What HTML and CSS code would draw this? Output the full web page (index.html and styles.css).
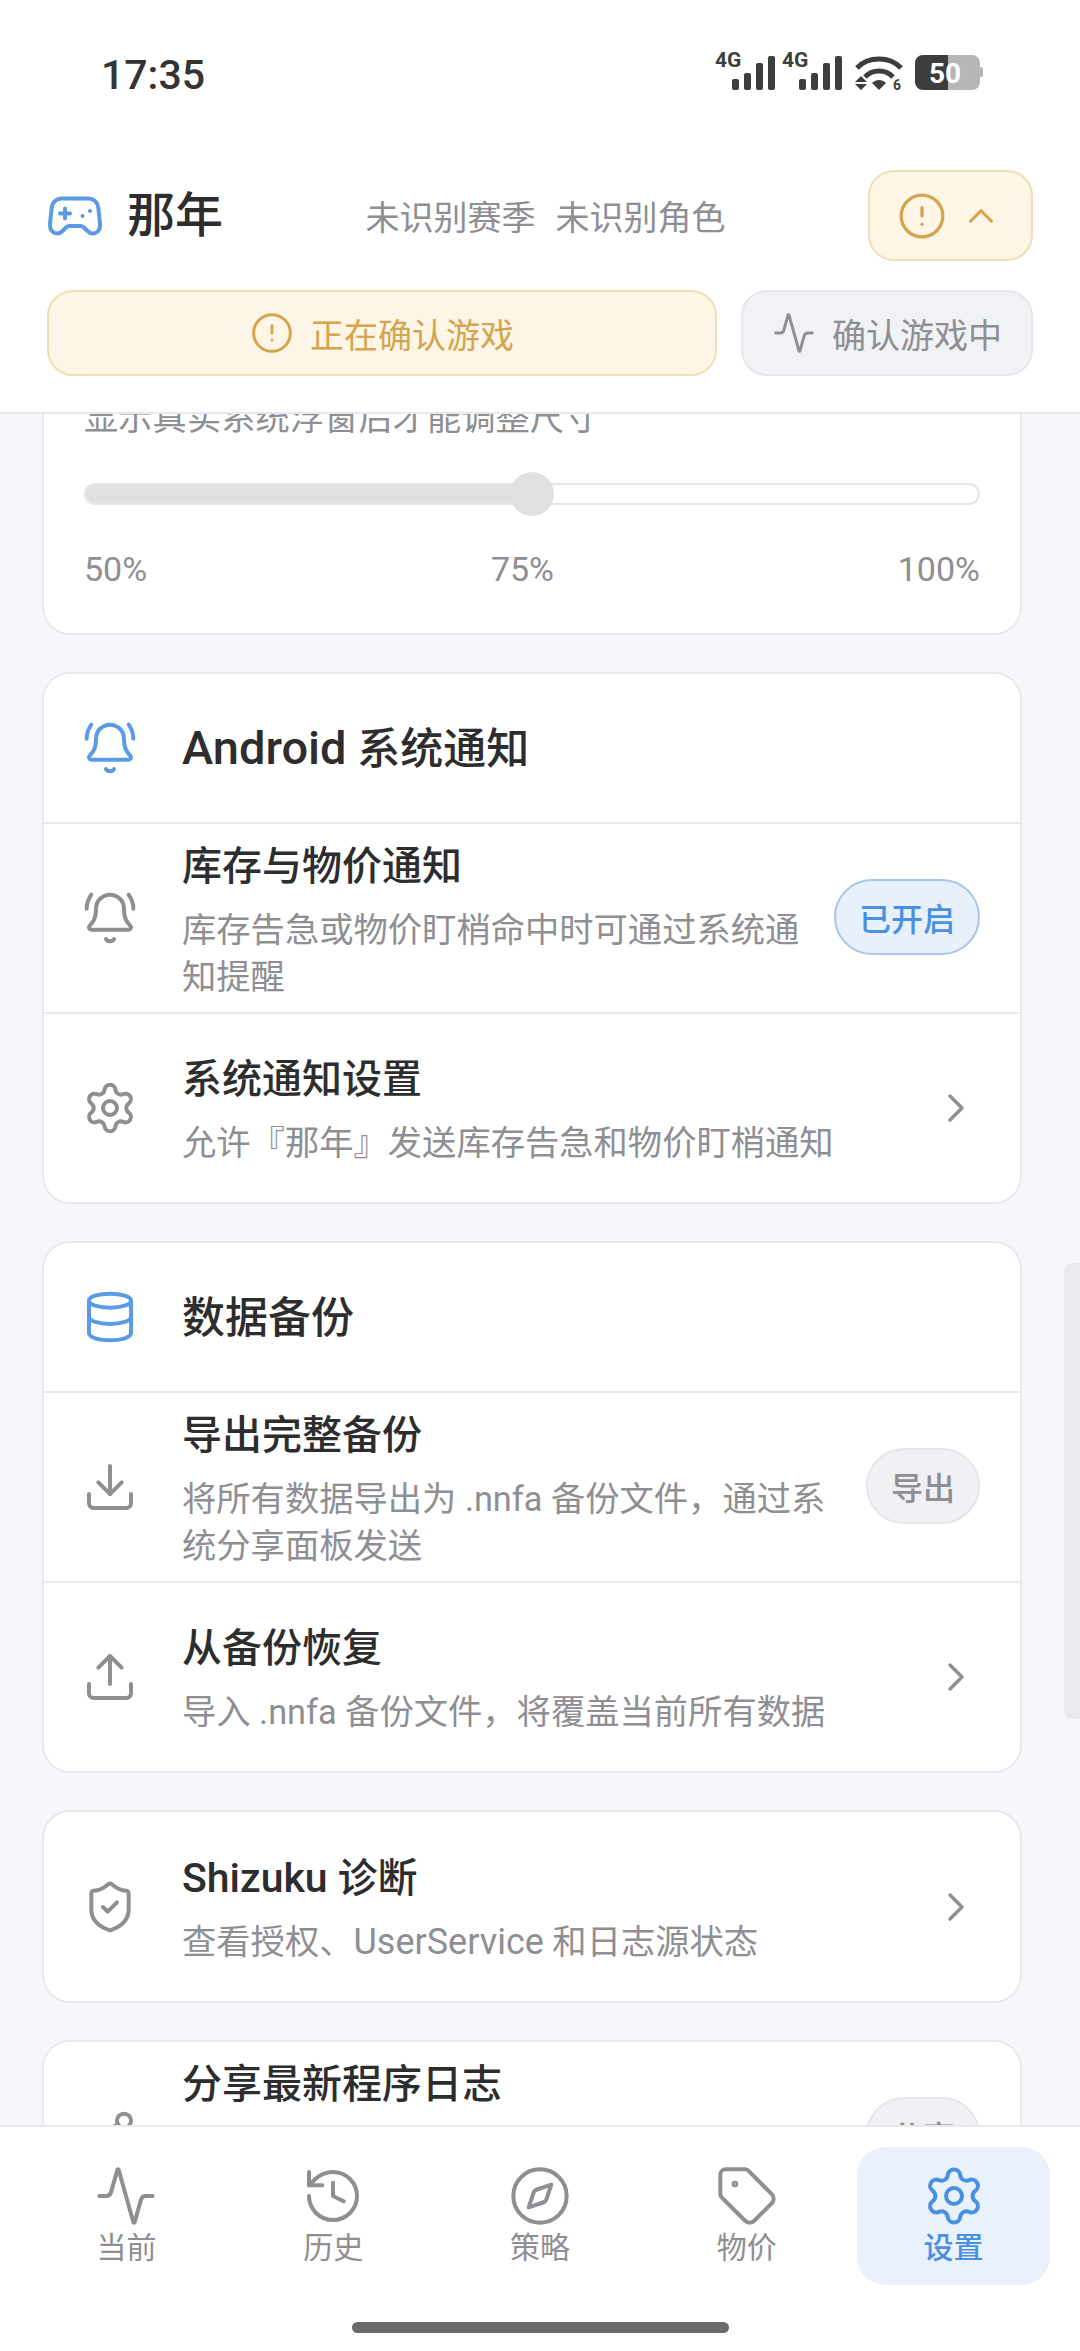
FILE: index.html
```html
<!DOCTYPE html>
<html lang="zh-CN">
<head>
    <meta charset="UTF-8">
    <meta name="viewport" content="width=device-width, initial-scale=1.0">
    <title>那年</title>
    <link rel="stylesheet" href="styles.css">
</head>
<body>
    <svg class="sprite" width="0" height="0">
        <symbol id="i-alert" viewBox="0 0 24 24"><circle cx="12" cy="12" r="10"/><path d="M12 8v4"/><path d="M12 16h.01"/></symbol>
        <symbol id="i-up" viewBox="0 0 24 24"><path d="m18 15-6-6-6 6"/></symbol>
        <symbol id="i-right" viewBox="0 0 24 24"><path d="m9 18 6-6-6-6"/></symbol>
        <symbol id="i-activity" viewBox="0 0 24 24"><path d="M22 12h-2.48a2 2 0 0 0-1.93 1.46l-2.35 8.36a.25.25 0 0 1-.48 0L9.24 2.18a.25.25 0 0 0-.48 0l-2.35 8.36A2 2 0 0 1 4.49 12H2"/></symbol>
        <symbol id="i-bell" viewBox="0 0 24 24"><path d="M10.268 21a2 2 0 0 0 3.464 0"/><path d="M22 8c0-2.3-.8-4.3-2-6"/><path d="M3.262 15.326A1 1 0 0 0 4 17h16a1 1 0 0 0 .74-1.673C19.41 13.956 18 12.499 18 8A6 6 0 0 0 6 8c0 4.499-1.411 5.956-2.738 7.326"/><path d="M4 2C2.8 3.7 2 5.7 2 8"/></symbol>
        <symbol id="i-gear" viewBox="0 0 24 24"><path d="M9.671 4.136a2.34 2.34 0 0 1 4.659 0 2.34 2.34 0 0 0 3.319 1.915 2.34 2.34 0 0 1 2.33 4.033 2.34 2.34 0 0 0 0 3.831 2.34 2.34 0 0 1-2.33 4.033 2.34 2.34 0 0 0-3.319 1.915 2.34 2.34 0 0 1-4.659 0 2.34 2.34 0 0 0-3.32-1.915 2.34 2.34 0 0 1-2.33-4.033 2.34 2.34 0 0 0 0-3.831A2.34 2.34 0 0 1 6.35 6.051a2.34 2.34 0 0 0 3.319-1.915"/><circle cx="12" cy="12" r="3"/></symbol>
        <symbol id="i-db" viewBox="0 0 24 24"><ellipse cx="12" cy="5" rx="9" ry="3"/><path d="M3 5V19A9 3 0 0 0 21 19V5"/><path d="M3 12A9 3 0 0 0 21 12"/></symbol>
        <symbol id="i-download" viewBox="0 0 24 24"><path d="M12 15V3"/><path d="M21 15v4a2 2 0 0 1-2 2H5a2 2 0 0 1-2-2v-4"/><path d="m7 10 5 5 5-5"/></symbol>
        <symbol id="i-upload" viewBox="0 0 24 24"><path d="M12 3v12"/><path d="m17 8-5-5-5 5"/><path d="M21 15v4a2 2 0 0 1-2 2H5a2 2 0 0 1-2-2v-4"/></symbol>
        <symbol id="i-shield" viewBox="0 0 24 24"><path d="M20 13c0 5-3.5 7.5-7.66 8.95a1 1 0 0 1-.67-.01C7.5 20.5 4 18 4 13V6a1 1 0 0 1 1-1c2 0 4.5-1.2 6.24-2.72a1.17 1.17 0 0 1 1.52 0C14.51 3.81 17 5 19 5a1 1 0 0 1 1 1z"/><path d="m9 12 2 2 4-4"/></symbol>
        <symbol id="i-share" viewBox="0 0 24 24"><circle cx="18" cy="5" r="3"/><circle cx="6" cy="12" r="3"/><circle cx="18" cy="19" r="3"/><path d="m8.59 13.51 6.83 3.98"/><path d="m15.41 6.51-6.82 3.98"/></symbol>
    </svg>

    <div class="top">
        <div class="status-bar">
            <span class="clock">17:35</span>
            <svg class="status-icons" width="270" height="56" viewBox="0 -8 270 56">
                <text class="net" x="1" y="15">4G</text>
                <rect x="18" y="27" width="7" height="11" rx="2"/><rect x="30" y="21" width="7" height="17" rx="2"/><rect x="42" y="11" width="7" height="27" rx="2"/><rect x="54" y="4" width="7" height="34" rx="2"/>
                <text class="net" x="68" y="15">4G</text>
                <rect x="85" y="27" width="7" height="11" rx="2"/><rect x="97" y="21" width="7" height="17" rx="2"/><rect x="109" y="11" width="7" height="27" rx="2"/><rect x="121" y="4" width="7" height="34" rx="2"/>
                <g fill="none" stroke="#3d3d3d" stroke-width="5">
                    <path d="M143 16 C154 4 176 4 187 16"/>
                    <path d="M151 25 C158 17 172 17 179 25"/>
                </g>
                <path d="M158 31 C162 27 168 27 172 31 L165 38Z"/>
                <path d="M147 24 L153 30 H141Z M147 38 L153 32 H141Z"/>
                <text class="wifi-num" x="179" y="38">6</text>
                <path class="batt-bg" d="M234 3 H258 a8 8 0 0 1 8 8 V30 a8 8 0 0 1 -8 8 H234Z"/>
                <rect class="batt-bg" x="266" y="15" width="3" height="10" rx="1.5"/>
                <path d="M234 3 H209 a8 8 0 0 0 -8 8 V30 a8 8 0 0 0 8 8 H234Z"/>
                <text class="batt-num" x="215" y="31">50</text>
            </svg>
        </div>
        <header class="header">
            <div class="title-row">
                <svg class="ico ico-game" viewBox="0 0 24 24"><path d="M6 11h4"/><path d="M8 9v4"/><path d="M15 12h.01"/><path d="M18 10h.01"/><path d="M17.32 5H6.68a4 4 0 0 0-3.978 3.59c-.006.052-.01.101-.017.152C2.604 9.416 2 14.456 2 16a3 3 0 0 0 3 3c1 0 1.5-.5 2-1l1.414-1.414A2 2 0 0 1 9.828 16h4.344a2 2 0 0 1 1.414.586L17 18c.5.5 1 1 2 1a3 3 0 0 0 3-3c0-1.545-.604-6.584-.685-7.258-.007-.05-.011-.1-.017-.151A4 4 0 0 0 17.32 5z"/></svg>
                <h1 class="app-name">那年</h1>
                <div class="season"><span>未识别赛季</span><span>未识别角色</span></div>
                <button class="warn-btn">
                    <svg class="ico ico-alert"><use href="#i-alert"/></svg>
                    <svg class="ico ico-up"><use href="#i-up"/></svg>
                </button>
            </div>
            <div class="state-row">
                <div class="state state-warn">
                    <svg class="ico ico-state"><use href="#i-alert"/></svg>
                    <span>正在确认游戏</span>
                </div>
                <div class="state state-grey">
                    <svg class="ico ico-state"><use href="#i-activity"/></svg>
                    <span>确认游戏中</span>
                </div>
            </div>
        </header>
    </div>

    <main class="scroll">
        <section class="card card-cut">
            <p class="sub">显示真实系统浮窗后才能调整尺寸</p>
            <div class="slider">
                <div class="slider-fill" style="width: 50%"></div>
                <div class="slider-thumb" style="left: 50%"></div>
            </div>
            <div class="slider-labels"><span>50%</span><span>75%</span><span>100%</span></div>
        </section>

        <section class="card">
            <div class="card-head">
                <svg class="ico ico-row ico-blue"><use href="#i-bell"/></svg>
                <h2><span class="latin-lg">Android</span> 系统通知</h2>
            </div>
            <div class="row">
                <svg class="ico ico-row"><use href="#i-bell"/></svg>
                <div class="row-text">
                    <h3>库存与物价通知</h3>
                    <p class="sub">库存告急或物价盯梢命中时可通过系统通知提醒</p>
                </div>
                <span class="pill pill-on">已开启</span>
            </div>
            <div class="row">
                <svg class="ico ico-row"><use href="#i-gear"/></svg>
                <div class="row-text">
                    <h3>系统通知设置</h3>
                    <p class="sub">允许『那年』发送库存告急和物价盯梢通知</p>
                </div>
                <svg class="ico ico-chev"><use href="#i-right"/></svg>
            </div>
        </section>

        <section class="card">
            <div class="card-head">
                <svg class="ico ico-row ico-blue"><use href="#i-db"/></svg>
                <h2>数据备份</h2>
            </div>
            <div class="row">
                <svg class="ico ico-row"><use href="#i-download"/></svg>
                <div class="row-text">
                    <h3>导出完整备份</h3>
                    <p class="sub">将所有数据导出为 .nnfa 备份文件，通过系统分享面板发送</p>
                </div>
                <span class="pill">导出</span>
            </div>
            <div class="row">
                <svg class="ico ico-row"><use href="#i-upload"/></svg>
                <div class="row-text">
                    <h3>从备份恢复</h3>
                    <p class="sub">导入 .nnfa 备份文件，将覆盖当前所有数据</p>
                </div>
                <svg class="ico ico-chev"><use href="#i-right"/></svg>
            </div>
        </section>

        <section class="card">
            <div class="row">
                <svg class="ico ico-row"><use href="#i-shield"/></svg>
                <div class="row-text">
                    <h3><span class="latin-md">Shizuku</span> 诊断</h3>
                    <p class="sub">查看授权、<span class="latin-sm">UserService</span> 和日志源状态</p>
                </div>
                <svg class="ico ico-chev"><use href="#i-right"/></svg>
            </div>
        </section>

        <section class="card">
            <div class="row">
                <svg class="ico ico-row"><use href="#i-share"/></svg>
                <div class="row-text">
                    <h3>分享最新程序日志</h3>
                    <p class="sub">通过系统分享面板发送最新的程序日志文件用于排查问题</p>
                </div>
                <span class="pill">分享</span>
            </div>
        </section>

        <div class="scrollbar"></div>
    </main>

    <nav class="nav">
        <div class="tabs">
            <div class="tab"><svg class="ico ico-tab"><use href="#i-activity"/></svg><span>当前</span></div>
            <div class="tab">
                <svg class="ico ico-tab" viewBox="0 0 24 24"><path d="M3 12a9 9 0 1 0 9-9 9.75 9.75 0 0 0-6.74 2.74L3 8"/><path d="M3 3v5h5"/><path d="M12 7v5l4 2"/></svg>
                <span>历史</span>
            </div>
            <div class="tab">
                <svg class="ico ico-tab" viewBox="0 0 24 24"><circle cx="12" cy="12" r="10"/><path d="m16.24 7.76-1.804 5.411a2 2 0 0 1-1.265 1.265L7.76 16.24l1.804-5.411a2 2 0 0 1 1.265-1.265z"/></svg>
                <span>策略</span>
            </div>
            <div class="tab">
                <svg class="ico ico-tab" viewBox="0 0 24 24"><path d="M12.586 2.586A2 2 0 0 0 11.172 2H4a2 2 0 0 0-2 2v7.172a2 2 0 0 0 .586 1.414l8.704 8.704a2.426 2.426 0 0 0 3.42 0l6.58-6.58a2.426 2.426 0 0 0 0-3.42z"/><circle cx="7.5" cy="7.5" r=".5"/></svg>
                <span>物价</span>
            </div>
            <div class="tab tab-active"><svg class="ico ico-tab"><use href="#i-gear"/></svg><span>设置</span></div>
        </div>
        <div class="home-bar"></div>
    </nav>
</body>
</html>
```
FILE: styles.css
```css
* {
    box-sizing: border-box;
}

html, body {
    margin: 0;
    height: 2351px;
    overflow: hidden;
}

body {
    display: flex;
    flex-direction: column;
    background-color: #f5f7fb;
    color: #2d2d2d;
    font-family: Roboto, "Noto Sans CJK SC", sans-serif;
}

h1, h2, h3, p {
    margin: 0;
}

.sprite {
    position: absolute;
}

.ico {
    flex: none;
    fill: none;
    stroke: currentColor;
    stroke-width: 1.7;
    stroke-linecap: round;
    stroke-linejoin: round;
}

/* top area */
.top {
    flex: none;
    background-color: #fff;
    border-bottom: 2px solid #e8e9ec;
}

.status-bar {
    height: 150px;
    padding: 0 96px 0 101px;
    display: flex;
    justify-content: space-between;
    align-items: center;
}

.clock {
    font-size: 41px;
    font-weight: 500;
    color: #333;
}

.status-icons {
    margin-bottom: 7px;
    fill: #3d3d3d;
}

.net {
    font-size: 21px;
    font-weight: 700;
}

.wifi-num {
    font-size: 14px;
    font-weight: 700;
}

.batt-bg {
    fill: #b7b7b7;
}

.batt-num {
    font-size: 28px;
    font-weight: 700;
    fill: #fff;
}

.header {
    padding: 20px 47px 36px;
}

.title-row {
    display: flex;
    align-items: center;
}

.ico-game {
    width: 60px;
    height: 60px;
    margin-left: -2px;
    color: #5b9be6;
    stroke-width: 1.6;
}

.app-name {
    margin-left: 22px;
    font-size: 48px;
    font-weight: 500;
    line-height: 60px;
}

.season {
    flex: 1;
    display: flex;
    justify-content: center;
    gap: 20px;
    font-size: 34px;
    color: #8e8e93;
}

.warn-btn {
    width: 165px;
    height: 91px;
    display: flex;
    align-items: center;
    padding: 0 0 0 27px;
    background-color: #fdf5e6;
    border: 2px solid #efdfb8;
    border-radius: 26px;
    color: #d4a54e;
}

.ico-alert {
    width: 50px;
    height: 50px;
    stroke-width: 1.6;
}

.ico-up {
    width: 42px;
    height: 42px;
    margin-left: 13px;
    stroke-width: 1.8;
}

.state-row {
    display: flex;
    gap: 24px;
    margin-top: 29px;
}

.state {
    height: 86px;
    display: flex;
    justify-content: center;
    align-items: center;
    gap: 16px;
    border-radius: 26px;
    font-size: 34px;
}

.state-warn {
    flex: 1;
    background-color: #fdf5e6;
    border: 2px solid #efdfb8;
    color: #d4a54e;
}

.state-grey {
    width: 292px;
    background-color: #f1f2f6;
    border: 2px solid #e6e7ec;
    color: #8e8e93;
}

.ico-state {
    width: 44px;
    height: 44px;
    stroke-width: 1.6;
}

/* scroll area */
.scroll {
    flex: 1;
    min-height: 0;
    position: relative;
    overflow: hidden;
    padding: 0 58px 0 42px;
}

.scrollbar {
    position: absolute;
    top: 849px;
    right: 0;
    width: 16px;
    height: 456px;
    background-color: #e9ebef;
    border-radius: 8px 0 0 8px;
}

.card {
    margin-bottom: 37px;
    background-color: #fff;
    border: 2px solid #e8e9ec;
    border-radius: 28px;
}

.card-cut {
    margin-top: -40px;
    padding: 19px 40px 40px;
}

.sub {
    font-size: 34.3px;
    line-height: 47px;
    color: #8e8e93;
}

.latin-sm {
    font-size: 36px;
}

.latin-md {
    font-size: 41px;
}

.latin-lg {
    font-size: 47px;
}

.slider {
    position: relative;
    height: 22px;
    margin-top: 41px;
    background-color: #fff;
    border: 2px solid #e6e6e9;
    border-radius: 11px;
}

.slider-fill {
    height: 100%;
    background-color: #e0e0e0;
    border-radius: 9px 0 0 9px;
}

.slider-thumb {
    position: absolute;
    top: -13px;
    width: 44px;
    height: 44px;
    margin-left: -22px;
    background-color: #e0e0e0;
    border-radius: 50%;
}

.slider-labels {
    display: flex;
    justify-content: space-between;
    margin-top: 41px;
    font-size: 34px;
    line-height: 47px;
    color: #8e8e93;
}

.card-head {
    height: 150px;
    display: flex;
    align-items: center;
    gap: 44px;
    padding-left: 38px;
    border-bottom: 2px solid #e8e9ec;
}

.card-head h2 {
    margin-bottom: 6px;
    font-size: 43px;
    font-weight: 500;
}

.ico-blue {
    color: #5b9be6;
}

.row {
    min-height: 190px;
    display: flex;
    align-items: center;
    gap: 44px;
    padding: 0 40px 0 38px;
    border-bottom: 2px solid #e8e9ec;
}

.row:last-child {
    min-height: 188px;
    border-bottom: none;
}

.row:only-child {
    min-height: 189px;
}

.row-text {
    flex: 1;
    min-width: 0;
    margin-right: -20px;
    padding-top: 3px;
}

.row-text h3 {
    font-size: 40px;
    font-weight: 500;
    line-height: 56px;
    margin-bottom: 12px;
}

.ico-row {
    width: 56px;
    height: 56px;
    color: #8e8e93;
}

.ico-row.ico-blue {
    color: #5b9be6;
}

.ico-chev {
    width: 48px;
    height: 48px;
    color: #8e8e93;
}

.pill {
    flex: none;
    height: 76px;
    margin-bottom: 3px;
    padding: 0 23px;
    display: flex;
    align-items: center;
    background-color: #f1f1f5;
    border: 2px solid #e6e6ea;
    border-radius: 38px;
    font-size: 32px;
    font-weight: 500;
    color: #8e8e93;
}

.pill-on {
    background-color: #e8f0fb;
    border-color: #a9c6e8;
    color: #4a90e2;
}

/* bottom nav */
.nav {
    flex: none;
    height: 226px;
    background-color: #fff;
    border-top: 2px solid #e8e9ec;
    padding-top: 20px;
}

.tabs {
    display: grid;
    grid-template-columns: repeat(5, 1fr);
    gap: 14px;
    padding: 0 30px;
}

.tab {
    height: 138px;
    display: flex;
    flex-direction: column;
    align-items: center;
    padding-top: 17px;
    border-radius: 28px;
    font-size: 30px;
    line-height: 40px;
    color: #8e8e93;
}

.tab-active {
    background-color: #e9f1fc;
    color: #4a90e2;
    font-weight: 500;
}

.ico-tab {
    width: 64px;
    height: 64px;
    stroke-width: 1.5;
}

.home-bar {
    width: 377px;
    height: 11px;
    margin: 37px auto 0;
    background-color: #6b6b6b;
    border-radius: 6px;
}
```
